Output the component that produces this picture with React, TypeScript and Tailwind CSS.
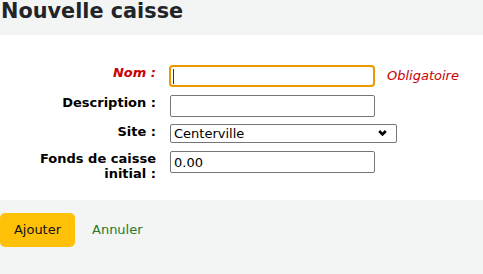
import React from "react";

const font = { fontFamily: '"DejaVu Sans", Verdana, sans-serif' };

function Label({ children, required }: { children: React.ReactNode; required?: boolean }) {
  return (
    <label
      className={`block w-[130px] shrink-0 text-right text-[13px] leading-[15px] font-bold mr-[14px] ${
        required ? "italic text-[#cc0000]" : "text-black"
      }`}
    >
      {children}
    </label>
  );
}

export default function App() {
  return (
    <div className="min-h-[274px] bg-[#f3f4f4] text-black" style={font}>
      {/* Header */}
      <div className="h-[35px]">
        <h1 className="pl-[1px] text-[20.8px] leading-[22px] font-bold text-[#212529]">
          Nouvelle caisse
        </h1>
      </div>

      {/* Form */}
      <fieldset className="bg-white pt-[30px] pb-[19px] pl-[26px]">
        <ol className="flex flex-col">
          <li className="flex items-start">
            <Label required>Nom :</Label>
            <div className="relative">
              <input
                type="text"
                className="block ml-[-1px] w-[206px] h-[22px] border-2 border-[#e89a00] rounded-[4px] px-[2px] text-[13px] outline-none"
              />
              <span className="absolute left-[3px] top-[4px] h-[15px] w-[1px] bg-[#b00000]" />
            </div>
            <span className="ml-[12px] text-[13px] leading-[22px] italic text-[#cc0000]">
              Obligatoire
            </span>
          </li>
          <li className="flex items-start mt-[8px]">
            <Label>Description :</Label>
            <input
              type="text"
              className="block w-[205px] h-[22px] border border-[#767676] rounded-[2px] px-[3px] text-[13px]"
            />
          </li>
          <li className="flex items-start mt-[7px]">
            <Label>Site :</Label>
            <div className="relative">
              <select
                defaultValue="centerville"
                className="block appearance-none w-[227px] h-[19px] border border-[#767676] rounded-[2px] pl-[3px] text-[13px] leading-[17px] bg-white"
              >
                <option value="centerville">Centerville</option>
              </select>
              <svg
                className="pointer-events-none absolute right-[10px] top-[5px]"
                width="9"
                height="8"
                viewBox="0 0 9 8"
              >
                <path d="M1.2 2 L4.5 5.3 L7.8 2" fill="none" stroke="#000" strokeWidth="2.6" />
              </svg>
            </div>
          </li>
          <li className="flex items-start mt-[8px]">
            <Label>Fonds de caisse initial :</Label>
            <input
              type="text"
              defaultValue="0.00"
              className="block w-[205px] h-[22px] border border-[#767676] rounded-[2px] px-[3px] text-[13px]"
            />
          </li>
        </ol>
      </fieldset>

      {/* Actions */}
      <div className="flex items-center pt-[13px]">
        <button className="h-[34px] w-[75px] rounded-[5px] bg-[#ffc107] text-[13px] text-[#111]">
          Ajouter
        </button>
        <a href="#" className="ml-[17px] text-[13px] text-[#267a26]">
          Annuler
        </a>
      </div>
    </div>
  );
}
